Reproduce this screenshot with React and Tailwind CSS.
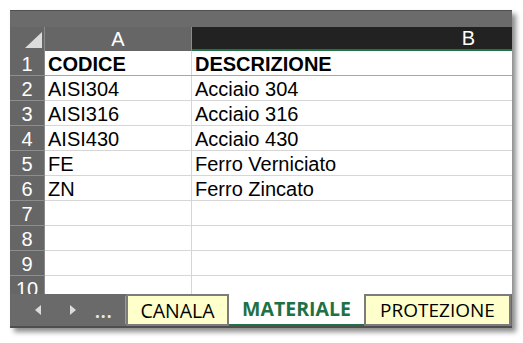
import React from 'react';

const rows = [
  { a: 'CODICE', b: 'DESCRIZIONE', bold: true },
  { a: 'AISI304', b: 'Acciaio 304' },
  { a: 'AISI316', b: 'Acciaio 316' },
  { a: 'AISI430', b: 'Acciaio 430' },
  { a: 'FE', b: 'Ferro Verniciato' },
  { a: 'ZN', b: 'Ferro Zincato' },
  { a: '', b: '' },
  { a: '', b: '' },
  { a: '', b: '' },
  { a: '', b: '' },
];

const cellFont = { fontFamily: '"Liberation Sans", Arial, sans-serif' };
const tabFont = { fontFamily: '"Open Sans", "Noto Sans", sans-serif' };

const App = () => {
  return (
    <div className="w-[523px] h-[343px] bg-white pt-[10px] pl-[10px]">
      <div
        className="w-[502px] h-[318px] flex flex-col bg-[#6a6a6a] shadow-[4px_4px_5px_rgba(0,0,0,0.45)]"
        style={cellFont}
      >
        {/* top strip */}
        <div className="h-[17px] border-t border-[#4f4f4f] bg-[#6b6b6b]" />

        {/* column headers */}
        <div className="h-[24px] flex text-white text-[20px] leading-[24px]">
          <div className="w-[35px] relative bg-[#666666] border-r border-[#8a8a8a]">
            <svg className="absolute left-[15px] top-[5px]" width="17" height="16" viewBox="0 0 17 16">
              <polygon points="17,0 17,16 0,16" fill="#dcdcdc" />
            </svg>
          </div>
          <div className="w-[147px] bg-[#666666] border-r border-[#8a8a8a] text-center">A</div>
          <div className="flex-1 bg-[#222222] border-b-2 border-[#217346] text-right pr-[37px] leading-[22px]">B</div>
        </div>

        {/* grid */}
        <div className="h-[243px] overflow-hidden bg-white">
          {rows.map((r, i) => (
            <div
              key={i}
              className={`h-[25px] flex text-[20px] leading-[26px] text-black border-b ${i === 0 ? 'border-[#a6a6a6]' : 'border-[#d6d6d6]'}`}
            >
              <div className="w-[35px] shrink-0 bg-[#666666] text-white text-center border-r border-[#8a8a8a] -mb-px border-b border-b-[#8d8d8d]">
                {i + 1}
              </div>
              <div className={`w-[147px] shrink-0 pl-[3px] border-r border-[#d6d6d6] ${r.bold ? 'font-bold' : ''}`}>
                {r.a}
              </div>
              <div className={`flex-1 pl-[3px] ${r.bold ? 'font-bold' : ''}`}>{r.b}</div>
            </div>
          ))}
        </div>

        {/* sheet tabs */}
        <div className="h-[34px] flex bg-[#6a6a6a] border-b-2 border-[#4e4e4e]" style={tabFont}>
          <div className="w-[115px] flex items-center text-[#d9d9d9]">
            <svg className="ml-[25px]" width="6" height="10" viewBox="0 0 6 10">
              <polygon points="6,0 6,10 0,5" fill="#dcdcdc" />
            </svg>
            <svg className="ml-[29px]" width="6" height="10" viewBox="0 0 6 10">
              <polygon points="0,0 0,10 6,5" fill="#dcdcdc" />
            </svg>
            <span className="ml-[19px] mt-[4px] text-[17px] font-bold tracking-[1px] text-[#e6e6e6]">...</span>
          </div>
          <div className="w-px my-[2px] bg-[#9a9a9a]" />
          <div className="flex items-stretch">
            <div className="w-[103px] bg-[#ffffcc] border-2 border-[#7c7c7c] text-black text-[19.5px] flex items-center justify-center pt-px">
              CANALA
            </div>
            <div className="w-[135px] bg-white border-b-2 border-[#217346] text-[#1e7145] text-[19.5px] font-bold flex items-center justify-center">
              MATERIALE
            </div>
            <div className="w-[147px] bg-[#ffffcc] border-2 border-[#7c7c7c] text-black text-[19px] flex items-center justify-center pt-px">
              PROTEZIONE
            </div>
          </div>
        </div>
      </div>
    </div>
  );
};

export default App;
